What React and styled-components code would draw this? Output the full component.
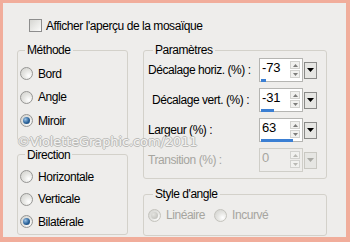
import React from "react";
import styled, { createGlobalStyle } from "styled-components";

const GlobalStyle = createGlobalStyle`
  html, body { margin: 0; padding: 0; background: #f1ad9b; }
  body { font-family: "Liberation Sans", Arial, sans-serif; }
`;

const Frame = styled.div`
  position: relative;
  box-sizing: border-box;
  width: 350px;
  height: 242px;
  border-style: solid;
  border-color: #f1ad9b;
  border-width: 3px 4px 5px 3px;
  background: #eeedeb;
  font-size: 12px;
  letter-spacing: -0.45px;
  color: #000;
  overflow: hidden;
`;

const TopRow = styled.label`
  display: flex;
  align-items: center;
  gap: 4px;
  margin: 16px 0 0 26px;
  height: 13px;
`;

const Check = styled.span`
  box-sizing: border-box;
  width: 13px;
  height: 13px;
  border: 1px solid #8d8d8d;
  background: linear-gradient(135deg, #d6d6d2 0%, #f4f4f2 80%, #fff 100%);
`;

const Columns = styled.div`
  display: grid;
  grid-template-columns: 111px 184px;
  column-gap: 15px;
  margin: 11px 0 0 14px;
`;

const Column = styled.div`
  display: flex;
  flex-direction: column;
  gap: ${(p) => p.$gap}px;
`;

const Group = styled.fieldset`
  margin: 0;
  min-width: 0;
  border: 1px solid #d3d1ca;
  border-radius: 3px;
  padding: ${(p) => p.$pad};
`;

const Legend = styled.legend`
  padding: 0 2px;
  margin-left: 5px;
  line-height: 14px;
  font-size: 12px;
`;

const RadioRow = styled.div`
  display: flex;
  align-items: center;
  gap: 5px;
  height: ${(p) => p.$h}px;
  color: ${(p) => (p.$disabled ? "#a6a59f" : "#000")};
`;

const RadioCircle = styled.span`
  box-sizing: border-box;
  width: 13px;
  height: 13px;
  border-radius: 50%;
  border: 1px solid ${(p) => (p.$disabled ? "#c4c3bd" : "#969694")};
  background: radial-gradient(circle at 70% 70%, #ffffff 0%, #e6e6e3 45%, #cfcfcb 100%);
  display: flex;
  align-items: center;
  justify-content: center;
  &::after {
    content: "";
    display: ${(p) => (p.$on ? "block" : "none")};
    width: 7px;
    height: 7px;
    border-radius: 50%;
    background: ${(p) =>
      p.$disabled
        ? "radial-gradient(circle at 35% 35%, #e4e4e0 0%, #b8b8b3 100%)"
        : "radial-gradient(circle at 35% 35%, #9cc3e6 0%, #2a6299 55%, #163c68 100%)"};
  }
`;

const RadioPair = styled.div`
  display: flex;
  gap: 9px;
`;

const SpinGrid = styled.div`
  display: grid;
  grid-template-columns: 110px 44px 13px;
  grid-auto-rows: 24px;
  row-gap: 6px;
  column-gap: 1px;
  align-items: center;
`;

const SpinLabel = styled.span`
  padding-left: ${(p) => p.$indent || 0}px;
  color: ${(p) => (p.$disabled ? "#a6a59f" : "#000")};
  white-space: nowrap;
`;

const SpinBox = styled.div`
  box-sizing: border-box;
  height: 24px;
  border: 1px solid ${(p) => (p.$disabled ? "#cfcec8" : "#b5b5b2")};
  background: ${(p) => (p.$disabled ? "#eeedeb" : "#fff")};
  display: grid;
  grid-template-columns: 1fr 10px;
  grid-template-rows: 1fr 4px;
  padding: 1px 2px 1px 1px;
`;

const SpinValue = styled.span`
  padding-left: 1px;
  line-height: 15px;
  font-size: 13px;
  letter-spacing: -0.2px;
  color: ${(p) => (p.$disabled ? "#a6a59f" : "#000")};
`;

const Arrows = styled.div`
  display: flex;
  flex-direction: column;
  gap: 1px;
  padding-top: 1px;
`;

const ArrowBtn = styled.span`
  box-sizing: border-box;
  height: 8px;
  border: 1px solid #d2d2cf;
  background: #f1f1ef;
  display: flex;
  align-items: center;
  justify-content: center;
`;

const Track = styled.div`
  grid-column: 1 / 3;
  align-self: end;
  height: 3px;
`;

const Fill = styled.div`
  height: 3px;
  background: #3b7fd3;
`;

const DropBtn = styled.span`
  box-sizing: border-box;
  width: 13px;
  height: 17px;
  border: 1px solid ${(p) => (p.$disabled ? "#c9c8c2" : "#8a8a88")};
  background: #e6e6e3;
  display: flex;
  align-items: center;
  justify-content: center;
`;

const Watermark = styled.div`
  position: absolute;
  left: 14px;
  top: 132px;
  font-family: "DejaVu Sans", Verdana, sans-serif;
  font-size: 13px;
  line-height: 14px;
  letter-spacing: -0.1px;
  color: #f3f3f2;
  text-shadow: 1px 0 0 #bcbcb9, -1px 0 0 #bcbcb9, 0 1px 0 #bcbcb9, 0 -1px 0 #bcbcb9;
  pointer-events: none;
`;

const Tri = ({ up, color }) => (
  <svg width={5} height={3} viewBox="0 0 5 3">
    <path d={up ? "M0 3 L2.5 0 L5 3 Z" : "M0 0 L5 0 L2.5 3 Z"} fill={color} />
  </svg>
);

function Radio({ label, on, disabled, h }) {
  return (
    <RadioRow $h={h} $disabled={disabled}>
      <RadioCircle $on={on} $disabled={disabled} />
      {label}
    </RadioRow>
  );
}

const params = [
  { label: "Décalage horiz. (%) :", value: -73 },
  { label: "Décalage vert. (%) :", value: -31, indent: 4 },
  { label: "Largeur (%) :", value: 63 },
  { label: "Transition (%) :", value: 0, disabled: true },
];

function Spin({ label, value, indent, disabled }) {
  const pct = ((value + 100) / 200) * 100;
  const arrow = disabled ? "#b9b9b4" : "#7d7d7b";
  return (
    <>
      <SpinLabel $indent={indent} $disabled={disabled}>{label}</SpinLabel>
      <SpinBox $disabled={disabled}>
        <SpinValue $disabled={disabled}>{value}</SpinValue>
        <Arrows>
          <ArrowBtn><Tri up color={arrow} /></ArrowBtn>
          <ArrowBtn><Tri color={arrow} /></ArrowBtn>
        </Arrows>
        <Track>{!disabled && <Fill style={{ width: `${pct}%` }} />}</Track>
      </SpinBox>
      <DropBtn $disabled={disabled}>
        <svg width="7" height="4" viewBox="0 0 7 4">
          <path d="M0 0 L7 0 L3.5 4 Z" fill={disabled ? "#a9a9a4" : "#000"} />
        </svg>
      </DropBtn>
    </>
  );
}

export default function App() {
  return (
    <>
      <GlobalStyle />
      <Frame>
        <TopRow>
          <Check />
          Afficher l'aperçu de la mosaïque
        </TopRow>
        <Columns>
          <Column $gap={7}>
            <Group $pad="5px 2px 7px 2px">
              <Legend>Méthode</Legend>
              <Radio label="Bord" h={23.5} />
              <Radio label="Angle" h={23.5} />
              <Radio label="Miroir" on h={23.5} />
            </Group>
            <Group $pad="4px 2px 1px 2px">
              <Legend>Direction</Legend>
              <Radio label="Horizontale" h={22.5} />
              <Radio label="Verticale" h={22.5} />
              <Radio label="Bilatérale" on h={22.5} />
            </Group>
          </Column>
          <Column $gap={8}>
            <Group $pad="1px 10px 6px 4px">
              <Legend>Paramètres</Legend>
              <SpinGrid>
                {params.map((p) => (
                  <Spin key={p.label} {...p} />
                ))}
              </SpinGrid>
            </Group>
            <Group $pad="3px 4px 9px 4px">
              <Legend>Style d'angle</Legend>
              <RadioPair>
                <Radio label="Linéaire" on disabled h={22} />
                <Radio label="Incurvé" disabled h={22} />
              </RadioPair>
            </Group>
          </Column>
        </Columns>
        <Watermark>©VioletteGraphic.com/2011</Watermark>
      </Frame>
    </>
  );
}
